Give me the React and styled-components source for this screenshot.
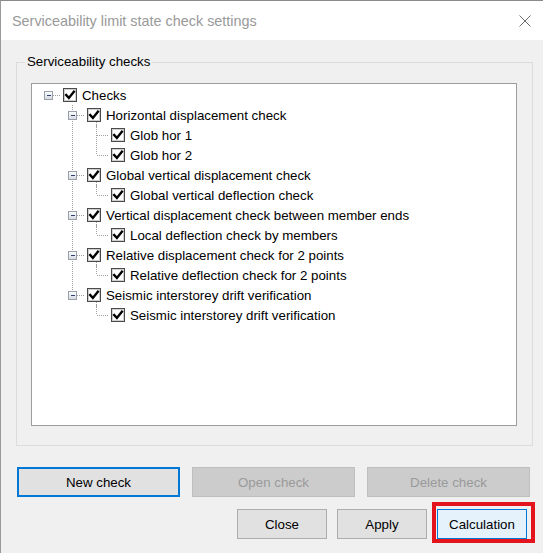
import React from "react";
import styled, { createGlobalStyle } from "styled-components";

const GlobalStyle = createGlobalStyle`
  html, body {
    margin: 0;
    padding: 0;
    background: #f0f0f0;
  }
  body {
    font-family: "Liberation Sans", Arial, sans-serif;
  }
`;

const TREE = {
  label: "Checks",
  children: [
    { label: "Horizontal displacement check", children: ["Glob hor 1", "Glob hor 2"] },
    { label: "Global vertical displacement check", children: ["Global vertical deflection check"] },
    { label: "Vertical displacement check between member ends", children: ["Local deflection check by members"] },
    { label: "Relative displacement check for 2 points", children: ["Relative deflection check for 2 points"] },
    { label: "Seismic interstorey drift verification", children: ["Seismic interstorey drift verification"] },
  ],
};

// flatten the tree into rows, each with the kind of guide drawn in every gutter column
const buildRows = (tree) => {
  const rows = [{ label: tree.label, cols: ["rootExp"], open: true }];
  tree.children.forEach((node, i) => {
    const last = i === tree.children.length - 1;
    rows.push({ label: node.label, cols: ["blank", last ? "expLast" : "expMid"], open: true });
    node.children.forEach((child, j) => {
      const childLast = j === node.children.length - 1;
      rows.push({
        label: child,
        cols: ["blank", last ? "blank" : "line", childLast ? "elbow" : "tee"],
      });
    });
  });
  return rows;
};

const DOT = { stroke: "#a0a0a0", strokeWidth: 1, strokeDasharray: "1 1", shapeRendering: "crispEdges" };

const GuideCell = ({ kind }) => {
  const hasExp = kind === "rootExp" || kind === "expMid" || kind === "expLast";
  return (
    <svg width="24" height="20" viewBox="0 0 24 20">
      {(kind === "line" || kind === "tee" || kind === "expMid") && (
        <line x1="12.5" y1="0" x2="12.5" y2="20" {...DOT} />
      )}
      {(kind === "elbow" || kind === "expLast") && (
        <line x1="12.5" y1="0" x2="12.5" y2="10" {...DOT} />
      )}
      {(kind === "tee" || kind === "elbow") && (
        <line x1="13" y1="10.5" x2="24" y2="10.5" {...DOT} />
      )}
      {hasExp && (
        <>
          <line x1="17" y1="10.5" x2="24" y2="10.5" {...DOT} />
          <defs>
            <linearGradient id={`exp-${kind}`} x1="0" y1="0" x2="0" y2="1">
              <stop offset="0" stopColor="#ffffff" />
              <stop offset="1" stopColor="#d4d8de" />
            </linearGradient>
          </defs>
          <rect x="8.5" y="6.5" width="8" height="8" fill={`url(#exp-${kind})`} stroke="#98a0ab" shapeRendering="crispEdges" />
          <line x1="10.5" y1="10.5" x2="15" y2="10.5" stroke="#2d3f6b" strokeWidth="1" shapeRendering="crispEdges" />
        </>
      )}
    </svg>
  );
};

const CheckMark = () => (
  <svg width="14" height="14" viewBox="0 0 14 14">
    <rect x="0.5" y="0.5" width="13" height="13" fill="#ffffff" stroke="#4a4a4a" shapeRendering="crispEdges" />
    <rect x="1.5" y="1.5" width="11" height="11" fill="none" stroke="#cfcfcf" shapeRendering="crispEdges" />
    <path d="M3.2 7 L5.9 9.9 L10.9 3.6" fill="none" stroke="#000" strokeWidth="2.4" strokeLinecap="square" />
  </svg>
);

const CloseIcon = () => (
  <svg width="12" height="12" viewBox="0 0 12 12">
    <path d="M0.5 0.5 L11.5 11.5 M11.5 0.5 L0.5 11.5" stroke="#6b6b6b" strokeWidth="1" fill="none" />
  </svg>
);

const App = () => {
  const rows = buildRows(TREE);

  return (
    <>
      <GlobalStyle />
      <Window>
        <TitleBar>
          <Title>Serviceability limit state check settings</Title>
          <CloseIcon />
        </TitleBar>
        <Body>
          <GroupBox>
            <GroupLabel>Serviceability checks</GroupLabel>
            <TreeView>
              {rows.map((row, i) => (
                <TreeRow key={i}>
                  {row.cols.map((kind, c) => (
                    <GuideCell key={c} kind={kind} />
                  ))}
                  <CheckBox $open={row.open && row.cols.length > 1}>
                    <CheckMark />
                  </CheckBox>
                  <NodeText>{row.label}</NodeText>
                </TreeRow>
              ))}
            </TreeView>
          </GroupBox>
          <ButtonRow>
            <Button $focused>New check</Button>
            <Button disabled>Open check</Button>
            <Button disabled>Delete check</Button>
          </ButtonRow>
          <ActionRow>
            <SmallButton>Close</SmallButton>
            <SmallButton>Apply</SmallButton>
            <Marked>
              <SmallButton $hover>Calculation</SmallButton>
            </Marked>
          </ActionRow>
        </Body>
      </Window>
    </>
  );
};

const Window = styled.div`
  width: 543px;
  height: 553px;
  box-sizing: border-box;
  border-top: 1px solid #8a8a8a;
  border-left: 1px solid #9a9a9a;
  background: #f0f0f0;
  display: flex;
  flex-direction: column;
  overflow: hidden;
`;

const TitleBar = styled.div`
  height: 39px;
  background: #ffffff;
  display: flex;
  align-items: center;
  justify-content: space-between;
  padding: 0 12px 0 11px;
  flex-shrink: 0;
`;

const Title = styled.span`
  font-size: 14.4px;
  color: #999999;
  padding-top: 1px;
`;

const Body = styled.div`
  padding: 14px 10px 0 15px;
  display: flex;
  flex-direction: column;
`;

const GroupBox = styled.fieldset`
  margin: 0;
  padding: 0 15px 19px 14px;
  min-width: 0;
  border: 1px solid #dcdcdc;
`;

const GroupLabel = styled.legend`
  font-size: 13.3px;
  line-height: 16px;
  color: #000;
  padding: 0 2px;
  margin-left: -6px;
`;

const TreeView = styled.div`
  margin-top: 13px;
  height: 343px;
  box-sizing: border-box;
  border: 1px solid #9c9c9c;
  background: #ffffff;
  padding: 1px 0 0 4px;
  display: flex;
  flex-direction: column;
`;

const TreeRow = styled.div`
  height: 20px;
  display: flex;
  align-items: center;

  & > svg {
    flex-shrink: 0;
  }
`;

// expanded level-1 nodes get a short dotted stub down toward their children
const CheckBox = styled.span`
  position: relative;
  display: flex;
  margin-left: 3px;
  margin-top: -1px;

  &::after {
    content: "";
    display: ${(p) => (p.$open ? "block" : "none")};
    position: absolute;
    left: 9px;
    top: 14px;
    height: 5px;
    border-left: 1px dotted #a0a0a0;
  }
`;

const NodeText = styled.span`
  font-size: 13.3px;
  color: #000;
  margin-left: 5px;
  white-space: nowrap;
`;

const ButtonRow = styled.div`
  display: flex;
  gap: 12px;
  margin-top: 21px;
  padding-left: 1px;
`;

const Button = styled.button`
  width: 163px;
  height: 30px;
  box-sizing: border-box;
  font-family: "Liberation Sans", Arial, sans-serif;
  font-size: 13.3px;
  color: #000;
  background: #e1e1e1;
  border: ${(p) => (p.$focused ? "2px solid #0078d7" : "1px solid #adadad")};
  padding: 0;

  &:disabled {
    background: #cccccc;
    border-color: #bfbfbf;
    color: #9a9a9a;
  }
`;

const ActionRow = styled.div`
  display: flex;
  justify-content: flex-end;
  gap: 10px;
  margin-top: 12px;
  padding-right: 6px;
`;

const SmallButton = styled.button`
  width: 90px;
  height: 30px;
  box-sizing: border-box;
  font-family: "Liberation Sans", Arial, sans-serif;
  font-size: 13.3px;
  color: #000;
  padding: 0;
  background: ${(p) => (p.$hover ? "#e5f1fb" : "#e1e1e1")};
  border: 1px solid ${(p) => (p.$hover ? "#0078d7" : "#adadad")};
`;

// red annotation frame drawn over the Calculation button
const Marked = styled.div`
  position: relative;
  display: flex;

  &::after {
    content: "";
    position: absolute;
    left: -5px;
    top: -7px;
    right: -8px;
    bottom: -4px;
    border: 4px solid #e3141c;
    pointer-events: none;
  }
`;

export default App;
